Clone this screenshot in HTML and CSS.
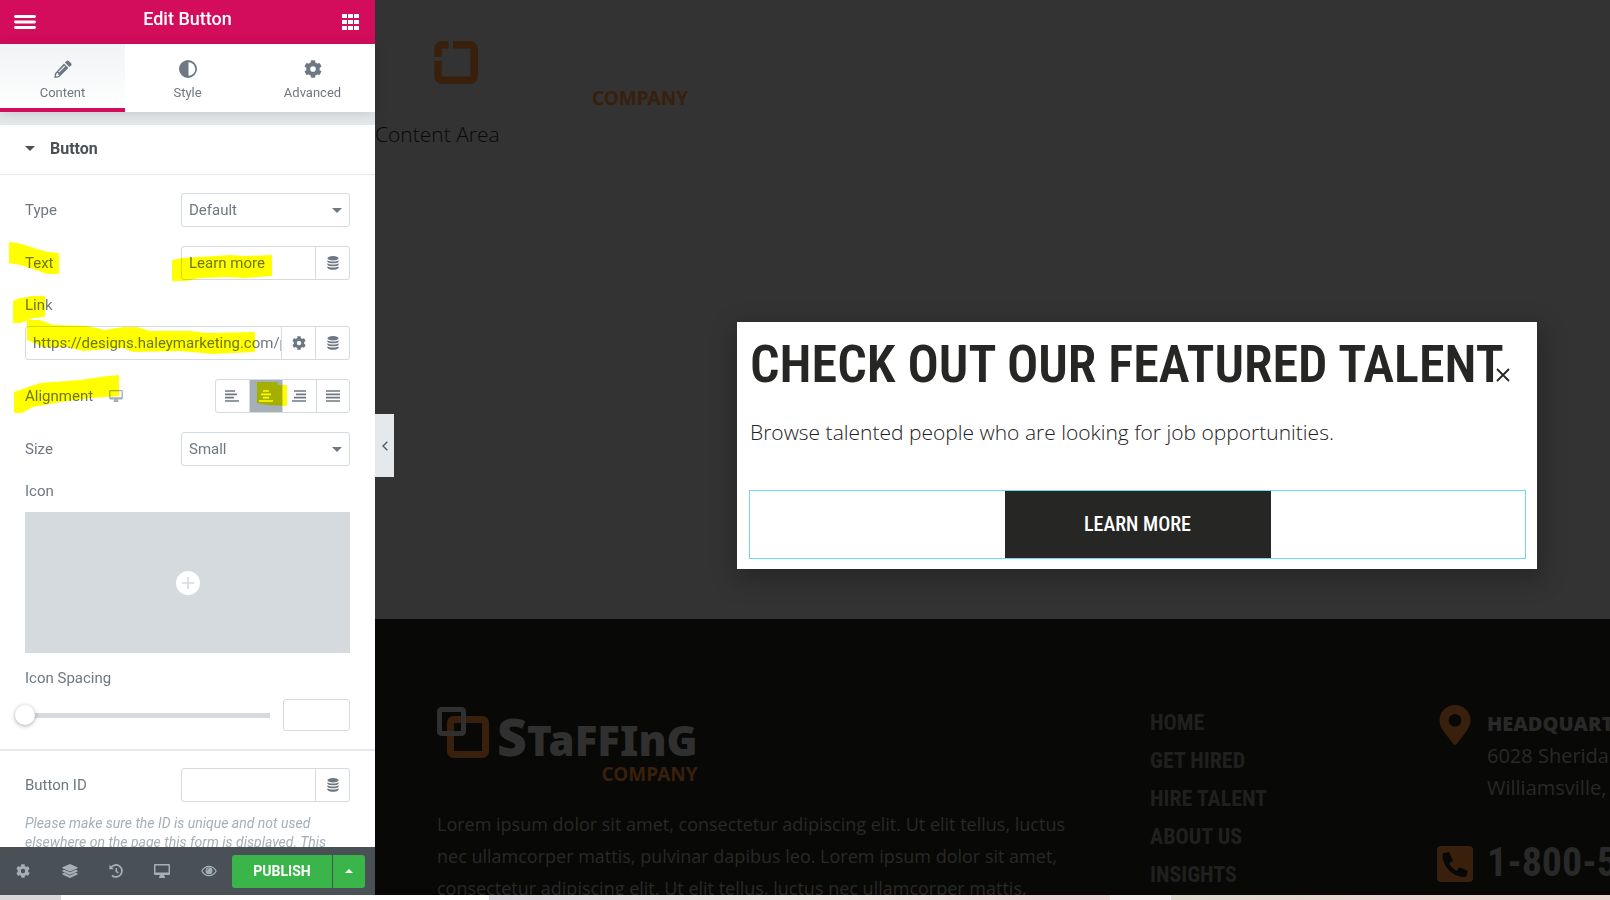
FILE: index.html
```html
<!DOCTYPE html>
<html lang="en">
<head>
  <meta charset="UTF-8">
  <title>Edit Button</title>
  <link rel="stylesheet" href="styles.css">
</head>
<body>

<!-- shared icons -->
<svg class="sprite" aria-hidden="true">
  <symbol id="gear" viewBox="0 0 512 512">
    <path d="M487 315l-43-24c5-23 5-47 0-70l43-25c5-3 7-8 6-14-11-36-30-69-55-96-4-4-10-5-15-3l-43 25c-18-16-38-28-60-36V23c0-6-4-11-9-12-37-8-75-8-110 0-6 1-10 6-10 12v49c-22 8-42 20-60 36L89 83c-5-3-11-2-15 3-25 27-44 60-55 96-1 6 1 11 6 14l43 25c-5 23-5 47 0 70l-43 25c-5 3-7 8-6 14 11 36 30 69 55 96 4 4 10 5 15 3l43-25c18 16 38 28 60 36v49c0 6 4 11 9 12 37 8 75 8 110 0 6-1 10-6 10-12v-49c22-8 42-20 60-36l43 25c5 3 11 2 15-3 25-27 44-60 55-96 1-6-1-12-7-15zM256 336a80 80 0 1 1 0-160 80 80 0 0 1 0 160z"/>
  </symbol>
  <symbol id="database" viewBox="0 0 12 14">
    <ellipse cx="6" cy="2.2" rx="5.6" ry="2.2"/>
    <path d="M.4 4.2c1.8 1.7 9.400 1.700 11.200 0v1.500c-1.200 2.200-10 2.200-11.200 0zM.4 7.200c1.800 1.700 9.400 1.700 11.200 0v1.500c-1.200 2.200-10 2.200-11.200 0zM.4 10.200c1.800 1.700 9.400 1.700 11.200 0v1.500c-1.200 2.700-10 2.700-11.200 0z"/>
  </symbol>
  <symbol id="desktop" viewBox="0 0 16 14">
    <path fill-rule="evenodd" d="M1.300 0h13.400C15.500 0 16 .5 16 1.300v8.400c0 .8-.5 1.300-1.300 1.300H10l.5 1.600h.5V14H5v-1.400h.5L6 11H1.300C.5 11 0 10.500 0 9.700V1.300C0 .5.500 0 1.300 0zm.200 1.500v7h13v-7z"/>
  </symbol>
  <symbol id="caret" viewBox="0 0 10 5"><path d="M0 0h10L5 5z"/></symbol>
</svg>

<div class="workspace">
  <aside class="panel">
    <header class="panel-header">
      <button class="bar-button" aria-label="Menu">
        <svg width="22" height="14" viewBox="0 0 22 14"><path d="M1.500 1.500h19M1.500 7h19M1.500 12.500h19" stroke="#fff" stroke-width="2.800" stroke-linecap="round"/></svg>
      </button>
      <h1 class="panel-title">Edit Button</h1>
      <button class="bar-button" aria-label="Widgets">
        <svg width="17" height="16" viewBox="0 0 17 16" fill="#fff"><path d="M0 0h5v4H0zM6 0h5v4H6zM12 0h5v4h-5zM0 6h5v4H0zM6 6h5v4H6zM12 6h5v4h-5zM0 12h5v4H0zM6 12h5v4H6zM12 12h5v4h-5z"/></svg>
      </button>
    </header>

    <nav class="tabs">
      <button class="tab tab-active">
        <svg width="18" height="18" viewBox="0 0 18 18"><path fill-rule="evenodd" d="M12.600.9c.6-.7 1.500-.7 2.200 0l2.300 2.300c.7.7.7 1.500 0 2.200l-1.700 1.700-4.500-4.500zM10 3.600 14.400 8 5 17.300l-4.700.7.700-4.700zM2.300 13.900l-.3 2 .6.500 1.900-.3 1-1.200-1.200-.2-.2-1.400-1-.2zM10.300 5.700l-6 6 .8.800 6-6z"/></svg>
        Content
      </button>
      <button class="tab">
        <svg width="18" height="18" viewBox="0 0 18 18"><path fill-rule="evenodd" d="M9 0a9 9 0 1 1 0 18A9 9 0 0 1 9 0zm.5 2.200v13.600a6.800 6.800 0 0 0 0-13.600z"/></svg>
        Style
      </button>
      <button class="tab">
        <svg width="18" height="18"><use href="#gear"/></svg>
        Advanced
      </button>
    </nav>

    <div class="panel-body">
      <button class="section-title">
        <svg width="10" height="5"><use href="#caret"/></svg>
        Button
      </button>

      <div class="controls">
        <div class="control">
          <label for="type">Type</label>
          <div class="select-box">
            <select id="type"><option>Default</option></select>
            <svg width="10" height="5"><use href="#caret"/></svg>
          </div>
        </div>

        <div class="control">
          <label for="text">Text</label>
          <div class="input-group">
            <input id="text" type="text" value="Learn more">
            <button aria-label="Dynamic tags"><svg width="12" height="14"><use href="#database"/></svg></button>
          </div>
        </div>

        <div class="control-stacked">
          <label for="link">Link</label>
          <div class="input-group">
            <input id="link" type="text" value="https://designs.haleymarketing.com/p">
            <button aria-label="Link options"><svg width="14" height="14"><use href="#gear"/></svg></button>
            <button aria-label="Dynamic tags"><svg width="12" height="14"><use href="#database"/></svg></button>
          </div>
        </div>

        <div class="control">
          <span class="label-icon">Alignment
            <svg width="14" height="12"><use href="#desktop"/></svg>
          </span>
          <div class="choices">
            <button aria-label="Left"><svg width="14" height="12" viewBox="0 0 14 12"><path d="M0 1h10M0 4.300h12M0 7.600h9M0 11h14"/></svg></button>
            <button class="chosen" aria-label="Center"><svg width="14" height="12" viewBox="0 0 14 12"><path d="M4 1h6M2 4.300h10M4 7.600h6M0 11h14"/></svg></button>
            <button aria-label="Right"><svg width="14" height="12" viewBox="0 0 14 12"><path d="M2 1h12M4 4.300h10M2 7.600h12M0 11h14"/></svg></button>
            <button aria-label="Justified"><svg width="14" height="12" viewBox="0 0 14 12"><path d="M0 1h14M0 4.300h14M0 7.600h14M0 11h14"/></svg></button>
          </div>
        </div>

        <div class="control">
          <label for="size">Size</label>
          <div class="select-box">
            <select id="size"><option>Small</option></select>
            <svg width="10" height="5"><use href="#caret"/></svg>
          </div>
        </div>

        <div class="control-stacked">
          <span>Icon</span>
          <button class="media" aria-label="Choose icon">
            <svg width="24" height="24" viewBox="0 0 24 24"><circle cx="12" cy="12" r="12" fill="#fff"/><path d="M12 6v12M6 12h12" stroke="#d5dadf" stroke-width="1.600"/></svg>
          </button>
        </div>

        <div class="control-stacked">
          <label for="spacing">Icon Spacing</label>
          <div class="slider-row">
            <input id="spacing" class="slider" type="range" min="0" max="50" value="0">
            <input class="number" type="text" aria-label="Icon spacing value">
          </div>
        </div>
      </div>

      <div class="controls controls-id">
        <div class="control">
          <label for="button-id">Button ID</label>
          <div class="input-group">
            <input id="button-id" type="text">
            <button aria-label="Dynamic tags"><svg width="12" height="14"><use href="#database"/></svg></button>
          </div>
        </div>
        <p class="description">Please make sure the ID is unique and not used elsewhere on the page this form is displayed. This</p>
      </div>
    </div>

    <footer class="panel-footer">
      <button class="tool" aria-label="Settings"><svg width="14" height="14"><use href="#gear"/></svg></button>
      <button class="tool" aria-label="Navigator"><svg width="16" height="14" viewBox="0 0 16 14"><path d="M8 0l7.600 3.300v1L8 7.600.4 4.300v-1zM.4 6.400l1.800-.700L8 8.300l5.800-2.600 1.800.700v1L8 10.700.4 7.400zM.4 9.500l1.800-.700L8 11.400l5.800-2.600 1.800.700v1L8 14 .4 10.500z"/></svg></button>
      <button class="tool" aria-label="History"><svg width="14" height="14" viewBox="0 0 14 14" fill="none" stroke="currentColor"><path d="M2 3.500A6 6 0 1 1 3 11.500" stroke-width="1.800"/><path d="M7.300 4v3.500l2 1.300" stroke-width="1.600"/><path d="M.4.800v4.500h4.500z" fill="currentColor" stroke="none"/></svg></button>
      <button class="tool" aria-label="Responsive mode"><svg width="16" height="14"><use href="#desktop"/></svg></button>
      <button class="tool" aria-label="Preview"><svg width="16" height="12" viewBox="0 0 16 12"><path fill-rule="evenodd" d="M8 .7c3.400 0 6.200 2 7.800 5.300-1.600 3.300-4.400 5.300-7.800 5.300S1.800 9.300.2 6C1.800 2.700 4.600.7 8 .7zM8 2C5.300 2 3 3.500 1.600 6 3 8.500 5.300 10 8 10s5-1.500 6.400-4C13 3.500 10.700 2 8 2z"/><circle cx="8" cy="5.700" r="3.500"/><path d="M6 5.500C6 4.300 6.900 3.500 8 3.500" fill="none" stroke="#495157" stroke-width=".8"/></svg></button>
      <div class="publish-group">
        <button class="publish">PUBLISH</button>
        <button class="publish-more" aria-label="Save options"><svg width="8" height="4" viewBox="0 0 8 4"><path d="M0 4h8L4 0z"/></svg></button>
      </div>
    </footer>

    <!-- marker strokes over the fields -->
    <svg class="marker" width="375" height="440" fill="#ff0" aria-hidden="true">
      <path d="M9 242l8 1 8 2 12 4 11 3 11 1v21H47l-14-5-13-4-11-2z"/>
      <path d="M172 260l10-2 18-1 30-2 15 1 27-1v21l-27 2-17-1-28 1-14 3h-14z"/>
      <path d="M13 301l7-3 13-2h12v21l-12 1-12 5h-8z"/>
      <path d="M27 320h13l13 5 34 1 18 4 18-3h14l13 4h40l17 2 48-1v20l-42 2-33-3-47 1-10-4-40 3-16-4H43l-16-7z"/>
      <path d="M14 392l26-9 40-3 27-4 12-1v21l-29 2-23 3-34 6-11 6h-8z"/>
      <path d="M257 382h20l1 3h9v21l-20-1-10-2z"/>
    </svg>

    <button class="collapse" aria-label="Hide panel"><svg width="6" height="10" viewBox="0 0 6 10"><path d="M5.300.7 1 5l4.300 4.300" fill="none" stroke="#556068" stroke-width="1.500"/></svg></button>
  </aside>

  <main class="preview">
    <section class="page-top">
      <div class="site-logo">
        <svg width="44" height="43" viewBox="0 0 44 43" fill="none" stroke="#38200d" stroke-width="7.500"><path d="M19 3.800h17.200a4 4 0 0 1 4 4v27.400a4 4 0 0 1-4 4H8a4 4 0 0 1-4-4V20M4 16V7.800a4 4 0 0 1 4-4h6.500"/></svg>
        <span class="logo-company">COMPANY</span>
      </div>
      <div class="content-area">Content Area</div>
    </section>

    <footer class="site-footer">
      <div class="footer-about">
        <div class="footer-logo">
          <svg width="53" height="52" viewBox="0 0 53 52" fill="none"><rect x="13.500" y="12.500" width="35" height="35" rx="3" stroke="#38200d" stroke-width="7"/><rect x="2.500" y="2.500" width="24" height="24" rx="2" stroke="#303030" stroke-width="5"/></svg>
          <div class="logo-words">
            <span class="logo-name"><b>S</b>TaFFInG</span>
            <span class="logo-company">COMPANY</span>
          </div>
        </div>
        <p class="footer-text">Lorem ipsum dolor sit amet, consectetur adipiscing elit. Ut elit tellus, luctus nec ullamcorper mattis, pulvinar dapibus leo. Lorem ipsum dolor sit amet, consectetur adipiscing elit. Ut elit tellus, luctus nec ullamcorper mattis,</p>
      </div>
      <nav class="footer-menu">
        <a href="#">HOME</a>
        <a href="#">GET HIRED</a>
        <a href="#">HIRE TALENT</a>
        <a href="#">ABOUT US</a>
        <a href="#">INSIGHTS</a>
      </nav>
      <div class="footer-contact">
        <div class="contact-row">
          <svg width="36" height="40" viewBox="0 0 36 40"><path fill-rule="evenodd" d="M18 0c8.700 0 15.500 6.800 15.500 15 0 5.500-2.500 9-5 12.500l-9 11.700c-.8 1-2.200 1-3 0L7.500 27.500c-2.500-3.500-5-7-5-12.500C2.500 6.800 9.300 0 18 0zm0 9a6.300 6.300 0 1 0 0 12.600A6.300 6.300 0 0 0 18 9z"/></svg>
          <p class="address"><strong>HEADQUARTERS</strong><br>6028 Sheridan<br>Williamsville, NY</p>
        </div>
        <div class="contact-row contact-phone">
          <svg width="36" height="36" viewBox="0 0 36 36"><rect width="36" height="36" rx="4"/><path d="M5.500 7.500 12 6l3.800 8.500-3.500 3c1.800 3.500 4 5.600 7.500 7.300l2.900-3.500 8 3.500-1.500 6.200C16 31.500 5 21 5.500 7.500z" fill="#080806"/></svg>
          <a class="phone" href="#">1-800-555</a>
        </div>
      </div>
    </footer>

    <div class="modal-layer">
      <div class="modal" role="dialog">
        <h2 class="modal-title">CHECK OUT OUR FEATURED TALENT</h2>
        <p class="modal-text">Browse talented people who are looking for job opportunities.</p>
        <div class="widget"><a class="learn-more" href="#">LEARN MORE</a></div>
        <button class="close" aria-label="Close"><svg width="14" height="14" viewBox="0 0 14 14"><path d="M1 1l12 12M13 1 1 13" stroke="#262624" stroke-width="1.800"/></svg></button>
      </div>
    </div>
  </main>
</div>
<div class="desktop-strip"></div>

</body>
</html>
```
FILE: styles.css
```css
* {
  box-sizing: border-box;
}

body {
  margin: 0;
  height: 100vh;
  display: flex;
  flex-direction: column;
  overflow: hidden;
  font-family: Roboto, sans-serif;
  font-size: 15px;
  color: #6d7882;
  fill: currentColor;
}

button, input, select {
  font: inherit;
  color: inherit;
}

button {
  display: flex;
  align-items: center;
  justify-content: center;
  padding: 0;
  border: 0;
  background: none;
  cursor: pointer;
}

svg {
  display: block;
  flex: none;
}

h1, h2, p {
  margin: 0;
}

a {
  color: inherit;
  text-decoration: none;
}

.sprite {
  position: absolute;
  width: 0;
  height: 0;
}

.workspace {
  flex: 1;
  min-height: 0;
  display: flex;
}

/* editor panel */
.panel {
  position: relative;
  z-index: 2;
  width: 375px;
  flex: none;
  display: flex;
  flex-direction: column;
  background: #fff;
}

.panel-header {
  display: flex;
  align-items: center;
  justify-content: space-between;
  height: 44px;
  padding: 0 14px;
  background: #d30c5c;
}

.bar-button {
  width: 22px;
  height: 36px;
}

.panel-title {
  font-size: 18px;
  font-weight: 500;
  line-height: 38px;
  align-self: flex-start;
  color: #fff;
}

.tabs {
  position: relative;
  display: flex;
  height: 68px;
  background: #fff;
  box-shadow: 0 2px 12px rgba(0, 0, 0, 0.14);
}

.tab {
  flex: 1;
  flex-direction: column;
  gap: 7px;
  padding-top: 7px;
  font-size: 13px;
  border-bottom: 4px solid transparent;
}

.tab-active {
  background: linear-gradient(#f1f3f5, #fff);
  border-bottom-color: #d30c5c;
}

.panel-body {
  flex: 1;
  min-height: 0;
  overflow: hidden;
  border-top: 13px solid #e6e9ec;
}

.section-title {
  width: 100%;
  height: 50px;
  padding-left: 25px;
  padding-bottom: 2px;
  gap: 15px;
  justify-content: flex-start;
  font-size: 16px;
  font-weight: 700;
  color: #495157;
  border-bottom: 1px solid #e6e9ec;
}

.controls {
  display: flex;
  flex-direction: column;
  gap: 19px;
  padding: 18px 25px;
}

.controls-id {
  gap: 12px;
  padding-top: 17px;
  border-top: 2px solid #e6e9ec;
}

.control {
  display: flex;
  align-items: center;
  justify-content: space-between;
}

.control .select-box,
.control .input-group {
  width: 169px;
}

.control-stacked {
  display: flex;
  flex-direction: column;
  gap: 14px;
  line-height: 13px;
}

.select-box {
  display: grid;
  align-items: center;
}

.select-box > * {
  grid-area: 1 / 1;
}

.select-box svg {
  justify-self: end;
  margin-right: 8px;
  pointer-events: none;
}

select {
  appearance: none;
  height: 34px;
  padding: 0 7px;
  background: #fff;
  border: 1px solid #d5dadf;
  border-radius: 3px;
}

.input-group {
  display: flex;
  height: 34px;
  border: 1px solid #d5dadf;
  border-radius: 3px;
}

.input-group input {
  flex: 1;
  min-width: 0;
  padding: 0 0 0 7px;
  border: 0;
  background: none;
}

.input-group button {
  width: 34px;
  border-left: 1px solid #d5dadf;
}

.label-icon {
  display: flex;
  align-items: center;
  gap: 16px;
}

.label-icon svg {
  color: #a4afb7;
}

.choices {
  display: flex;
  width: 135px;
  height: 34px;
  border: 1px solid #d5dadf;
  border-radius: 3px;
}

.choices button {
  flex: 1;
  border-right: 1px solid #d5dadf;
}

.choices button:last-child {
  border-right: 0;
}

.choices svg {
  stroke: #6d7882;
  stroke-width: 1.7;
}

.choices .chosen {
  background: #a4afb7;
}

.choices .chosen svg {
  stroke: #fff;
}

.media {
  height: 141px;
  background: #d5dadf;
}

.slider-row {
  display: flex;
  align-items: center;
  justify-content: space-between;
}

.slider {
  appearance: none;
  width: 255px;
  height: 20px;
  margin: 0 0 0 -10px;
  background: linear-gradient(#d5dadf, #d5dadf) right center / 245px 5px no-repeat;
}

.slider::-webkit-slider-thumb {
  appearance: none;
  width: 20px;
  height: 20px;
  border-radius: 50%;
  background: #fff;
  box-shadow: 0 1px 4px rgba(0, 0, 0, 0.35);
}

.number {
  width: 67px;
  height: 32px;
  border: 1px solid #d5dadf;
  border-radius: 3px;
}

.description {
  font-size: 14px;
  line-height: 19px;
  font-style: italic;
  color: #a4afb7;
}

.panel-footer {
  display: flex;
  align-items: center;
  height: 48px;
  padding-right: 10px;
  background: #495157;
}

.tool {
  flex: 1;
  height: 48px;
  color: #a4afb7;
}

.publish-group {
  display: flex;
  gap: 1px;
  width: 133px;
  height: 33px;
  border-radius: 3px;
  overflow: hidden;
  color: #fff;
}

.publish {
  flex: 1;
  font-size: 14px;
  font-weight: 700;
  background: #39b54a;
}

.publish-more {
  width: 32px;
  background: #39b54a;
}

.marker {
  position: absolute;
  top: 0;
  left: 0;
  mix-blend-mode: multiply;
  pointer-events: none;
}

.collapse {
  position: absolute;
  top: 414px;
  left: 100%;
  width: 19px;
  height: 63px;
  background: #e6e9ec;
}

/* page preview, dimmed behind the popup */
.preview {
  position: relative;
  flex: 1;
  min-width: 0;
  display: flex;
  flex-direction: column;
  overflow: hidden;
  background: #333;
  font-family: "Open Sans", sans-serif;
}

.page-top {
  height: 619px;
  flex: none;
}

.site-logo {
  display: flex;
  gap: 114px;
  height: 119px;
  padding: 41px 0 0 59px;
}

.site-logo .logo-company {
  margin-top: 48px;
}

.logo-company {
  font-family: "Noto Sans", sans-serif;
  font-size: 19px;
  font-weight: 700;
  line-height: 18px;
  color: #38200d;
}

.content-area {
  font-size: 21px;
  font-weight: 300;
  line-height: 30px;
  color: #080808;
}

.site-footer {
  flex: 1;
  display: flex;
  align-items: flex-start;
  padding: 84px 0 0 62px;
  background: #080806;
  color: #292929;
}

.footer-about {
  flex: none;
  width: 640px;
  margin-right: 73px;
  padding-top: 4px;
}

.footer-logo {
  display: flex;
  gap: 7px;
  height: 101px;
}

.logo-words {
  display: flex;
  flex-direction: column;
  align-items: flex-end;
  padding-top: 4px;
}

.logo-name {
  font-family: "Noto Sans", sans-serif;
  font-size: 42px;
  font-weight: 900;
  line-height: 50px;
  color: #303030;
}

.logo-name b {
  font-size: 52px;
  font-weight: 900;
}

.footer-text {
  font-size: 18px;
  line-height: 32px;
}

.footer-menu {
  flex: none;
  display: flex;
  flex-direction: column;
  width: 287px;
  padding-top: 1px;
  font-family: "Roboto Condensed", "Liberation Sans Narrow", sans-serif;
  font-size: 22px;
  font-weight: 700;
  line-height: 38px;
  color: #202020;
}

.footer-contact {
  flex: none;
  display: flex;
  flex-direction: column;
  gap: 39px;
  white-space: nowrap;
}

.contact-row {
  display: flex;
  gap: 14px;
}

.contact-row svg {
  margin-top: 2px;
  color: #38200d;
}

.address {
  font-size: 20px;
  line-height: 32px;
  padding-top: 5px;
}

.address strong {
  font-weight: 800;
}

.contact-phone {
  align-items: center;
}

.phone {
  font-family: "Roboto Condensed", "Liberation Sans Narrow", sans-serif;
  font-size: 40px;
  font-weight: 700;
  line-height: 40px;
}

/* popup */
.modal-layer {
  position: absolute;
  inset: 0;
  display: flex;
  align-items: center;
  justify-content: flex-end;
  padding: 0 73px 4px 0;
}

.modal {
  position: relative;
  width: 800px;
  padding: 12px 11px 10px 12px;
  background: #fff;
  box-shadow: 2px 8px 23px 3px rgba(0, 0, 0, 0.25);
}

.modal-title {
  padding-left: 1px;
  font-family: "Roboto Condensed", "Liberation Sans Narrow", sans-serif;
  font-size: 52px;
  font-weight: 600;
  line-height: 62px;
  white-space: nowrap;
  color: #262624;
}

.modal-text {
  padding: 20px 1px 42px;
  font-size: 21px;
  font-weight: 300;
  line-height: 32px;
  color: #222;
}

.widget {
  display: flex;
  justify-content: center;
  border: 1px solid #71d7f7;
}

.learn-more {
  width: 266px;
  font-family: "Roboto Condensed", "Liberation Sans Narrow", sans-serif;
  font-size: 20px;
  font-weight: 500;
  line-height: 67px;
  text-align: center;
  color: #fff;
  background: #262624;
}

.close {
  position: absolute;
  top: 46px;
  right: 27px;
}

.desktop-strip {
  height: 5px;
  flex: none;
  background: linear-gradient(90deg, #d8d8d8 61px, #fff 61px 489px, #dcd8e2 489px, #f0e8e0 830px, #ead6d6 1050px 1110px, #f7efef 1110px 1171px, #dfdbd0 1171px, #ead6d2 1400px, #e8d8d0);
}
```
